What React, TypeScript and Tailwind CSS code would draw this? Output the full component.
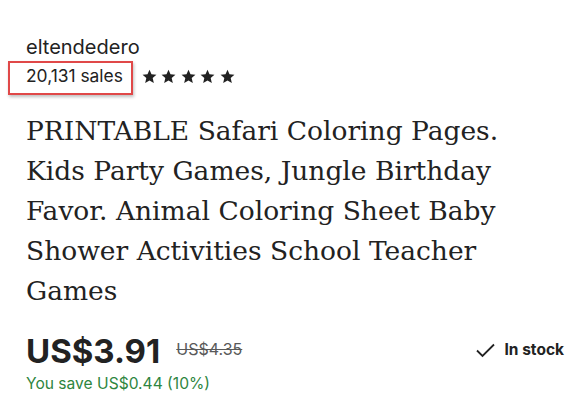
import React from 'react';

const Star: React.FC = () => (
  <svg width="15" height="15" viewBox="0 0 24 24" fill="#222222">
    <path d="M12 1.2l3.2 7.3 7.9.7-6 5.3 1.8 7.8L12 18.2l-6.9 4.1 1.8-7.8-6-5.3 7.9-.7z" />
  </svg>
);

const App: React.FC = () => {
  return (
    <div className="w-[585px] h-[414px] bg-white pl-[26px] pr-[21px] pt-[36px] text-[#222222] [font-family:Inter,'Liberation_Sans',sans-serif]">
      <div className="text-[20px] leading-[22px]">eltendedero</div>

      <div className="flex items-center mt-[4px] h-[28px]">
        <div className="relative">
          <span className="block text-[17.4px] leading-[20px]">20,131 sales</span>
          <div className="absolute left-[-18px] top-[-5px] w-[125px] h-[34px] border-[2.5px] border-[#e04848] shadow-[1px_2px_3px_rgba(0,0,0,0.25)]" />
        </div>
        <div className="flex items-center gap-[4.5px] ml-[19px]">
          <Star />
          <Star />
          <Star />
          <Star />
          <Star />
        </div>
      </div>

      <h1 className="mt-[21px] max-w-[510px] text-[26.5px] leading-[40px] font-normal text-[#222222] [font-family:'DejaVu_Serif','Liberation_Serif',serif]">
        PRINTABLE Safari Coloring Pages. Kids Party Games, Jungle Birthday Favor. Animal Coloring Sheet Baby Shower Activities School Teacher Games
      </h1>

      <div className="flex items-start justify-between mt-[21px]">
        <div>
          <div className="flex items-start gap-[16px]">
            <span className="text-[33px] leading-[38px] font-bold">US$3.91</span>
            <span className="mt-[7px] text-[16px] leading-[20px] text-[#595959] line-through">US$4.35</span>
          </div>
          <div className="text-[15.6px] leading-[20px] text-[#2e8540] mt-[4px]">You save US$0.44 (10%)</div>
        </div>
        <div className="flex items-center gap-[10px] mt-[8px]">
          <svg width="19" height="15" viewBox="0 0 19 15" fill="none" stroke="#222222" strokeWidth="1.8">
            <path d="M1 7.5l5.5 5.5L18 1.5" />
          </svg>
          <span className="text-[15.5px] leading-[20px] font-bold">In stock</span>
        </div>
      </div>
    </div>
  );
};

export default App;
